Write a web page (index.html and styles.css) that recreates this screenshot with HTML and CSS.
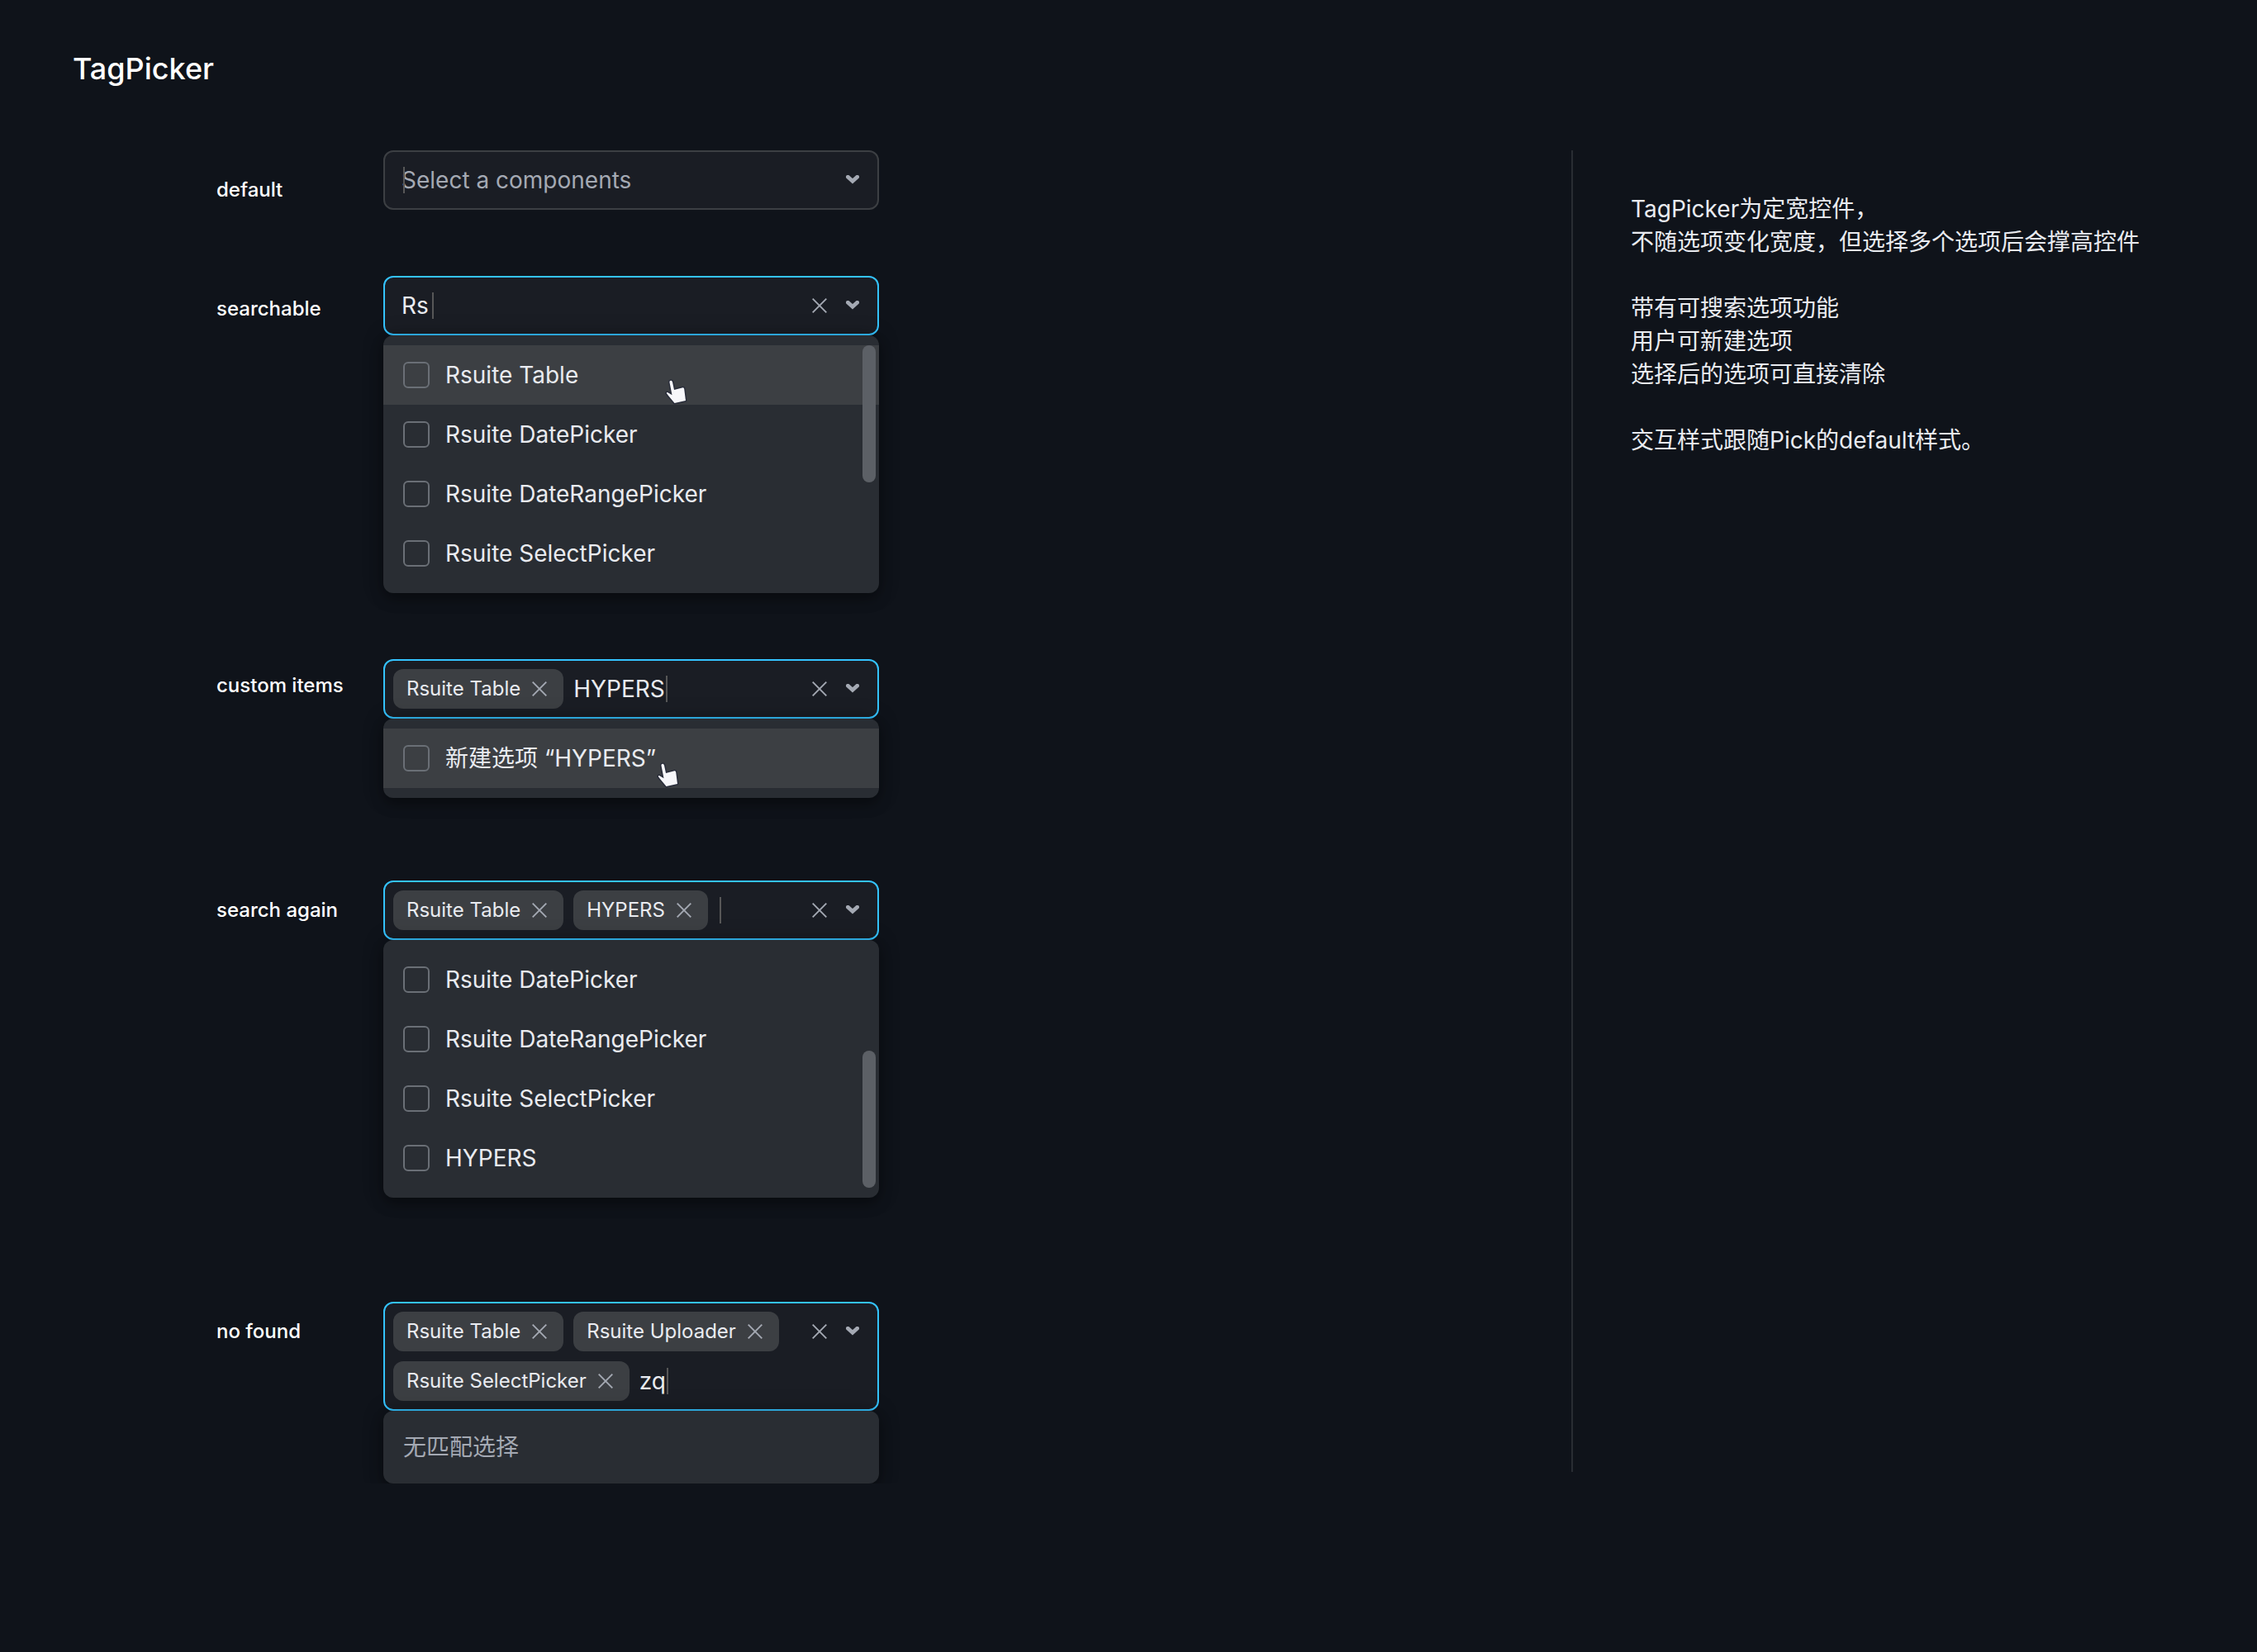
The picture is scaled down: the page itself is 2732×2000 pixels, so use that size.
FILE: index.html
```html
<!DOCTYPE html>
<html lang="zh-CN">
<head>
  <meta charset="utf-8">
  <meta name="viewport" content="width=device-width, initial-scale=1">
  <title>TagPicker</title>
  <link rel="stylesheet" href="styles.css">
</head>
<body>
  <svg class="sprite" aria-hidden="true">
    <symbol id="close" viewBox="0 0 18 18"><path d="M.7.7l16.6 16.6M17.3.7L.7 17.3" fill="none" stroke="currentColor" stroke-width="1.9"/></symbol>
    <symbol id="chevron" viewBox="0 0 16 12"><path d="M2.4 2.200L8 7.200l5.600-5" fill="none" stroke="currentColor" stroke-width="4.800" stroke-linecap="round"/></symbol>
    <symbol id="hand" viewBox="0 0 36 40"><path d="M10.5 11C10 8.5 13.3 8 14 10.5L16 20l10.5-2.8q1.5-.2 1.7 1.8L30 33l-13.500 3L9 27l-2.200-3q.2-1.500 1.700-.7L13.500 26.300z" fill="#f7f7fa" stroke="#292d3a" stroke-width="3" stroke-linejoin="round" paint-order="stroke"/></symbol>
  </svg>

  <header class="page-header">
    <h1 class="page-title">TagPicker</h1>
  </header>

  <div class="layout">
    <main class="demos">
      <section class="demo">
        <label class="demo-label demo-label--default" for="picker-default">default</label>
        <div class="picker">
          <div class="control control--text">
            <div class="values">
              <span class="entry entry--empty"><span class="caret"></span><input class="search" id="picker-default" type="text" placeholder="Select a components"></span>
            </div>
            <div class="actions">
              <button class="action action--toggle" type="button" aria-label="Open"><svg><use href="#chevron"/></svg></button>
            </div>
          </div>
        </div>
      </section>

      <section class="demo">
        <label class="demo-label demo-label--searchable" for="picker-search">searchable</label>
        <div class="picker">
          <div class="control control--text control--active">
            <div class="values">
              <span class="entry"><input class="search" id="picker-search" type="text" value="Rs"><span class="caret"></span></span>
            </div>
            <div class="actions">
              <button class="action" type="button" aria-label="Clear"><svg><use href="#close"/></svg></button>
              <button class="action action--toggle" type="button" aria-label="Close"><svg><use href="#chevron"/></svg></button>
            </div>
          </div>
          <div class="menu">
            <label class="option option--hover"><input class="check" type="checkbox">Rsuite Table<svg class="pointer"><use href="#hand"/></svg></label>
            <label class="option"><input class="check" type="checkbox">Rsuite DatePicker</label>
            <label class="option"><input class="check" type="checkbox">Rsuite DateRangePicker</label>
            <label class="option"><input class="check" type="checkbox">Rsuite SelectPicker</label>
            <span class="thumb thumb--top"></span>
          </div>
        </div>
      </section>

      <section class="demo demo--roomy">
        <label class="demo-label demo-label--custom" for="picker-custom">custom items</label>
        <div class="picker">
          <div class="control control--active">
            <div class="values">
              <span class="tag">Rsuite Table<button class="tag-remove" type="button" aria-label="Remove Rsuite Table"><svg><use href="#close"/></svg></button></span>
              <span class="entry"><input class="search" id="picker-custom" type="text" value="HYPERS"><span class="caret"></span></span>
            </div>
            <div class="actions">
              <button class="action" type="button" aria-label="Clear"><svg><use href="#close"/></svg></button>
              <button class="action action--toggle" type="button" aria-label="Close"><svg><use href="#chevron"/></svg></button>
            </div>
          </div>
          <div class="menu">
            <label class="option option--hover"><input class="check" type="checkbox">新建选项 “HYPERS”<svg class="pointer pointer--create"><use href="#hand"/></svg></label>
          </div>
        </div>
      </section>

      <section class="demo demo--spacious">
        <label class="demo-label" for="picker-again">search again</label>
        <div class="picker">
          <div class="control control--active">
            <div class="values">
              <span class="tag">Rsuite Table<button class="tag-remove" type="button" aria-label="Remove Rsuite Table"><svg><use href="#close"/></svg></button></span>
              <span class="tag">HYPERS<button class="tag-remove" type="button" aria-label="Remove HYPERS"><svg><use href="#close"/></svg></button></span>
              <span class="entry"><input class="search" id="picker-again" type="text"><span class="caret"></span></span>
            </div>
            <div class="actions">
              <button class="action" type="button" aria-label="Clear"><svg><use href="#close"/></svg></button>
              <button class="action action--toggle" type="button" aria-label="Close"><svg><use href="#chevron"/></svg></button>
            </div>
          </div>
          <div class="menu">
            <label class="option"><input class="check" type="checkbox">Rsuite DatePicker</label>
            <label class="option"><input class="check" type="checkbox">Rsuite DateRangePicker</label>
            <label class="option"><input class="check" type="checkbox">Rsuite SelectPicker</label>
            <label class="option"><input class="check" type="checkbox">HYPERS</label>
            <span class="thumb thumb--bottom"></span>
          </div>
        </div>
      </section>

      <section class="demo">
        <label class="demo-label" for="picker-none">no found</label>
        <div class="picker">
          <div class="control control--active">
            <div class="values">
              <span class="tag">Rsuite Table<button class="tag-remove" type="button" aria-label="Remove Rsuite Table"><svg><use href="#close"/></svg></button></span>
              <span class="tag">Rsuite Uploader<button class="tag-remove" type="button" aria-label="Remove Rsuite Uploader"><svg><use href="#close"/></svg></button></span>
              <span class="tag">Rsuite SelectPicker<button class="tag-remove" type="button" aria-label="Remove Rsuite SelectPicker"><svg><use href="#close"/></svg></button></span>
              <span class="entry"><input class="search" id="picker-none" type="text" value="zq"><span class="caret"></span></span>
            </div>
            <div class="actions">
              <button class="action" type="button" aria-label="Clear"><svg><use href="#close"/></svg></button>
              <button class="action action--toggle" type="button" aria-label="Close"><svg><use href="#chevron"/></svg></button>
            </div>
          </div>
          <div class="menu menu--empty">无匹配选择</div>
        </div>
      </section>
    </main>

    <aside class="notes">
      <p>TagPicker为定宽控件，<br>不随选项变化宽度，但选择多个选项后会撑高控件</p>
      <p>带有可搜索选项功能<br>用户可新建选项<br>选择后的选项可直接清除</p>
      <p>交互样式跟随Pick的default样式。</p>
    </aside>
  </div>
</body>
</html>
```
FILE: styles.css
```css
:root {
  --bg: #0f131a;
  --field: #1a1d24;
  --menu: #292d33;
  --raised: #3c3f43;
  --thumb: #5c6066;
  --outline: #6a6f76;
  --muted: #a4a9b3;
  --text: #e9ebf0;
  --primary: #34c3ff;
}

* {
  box-sizing: border-box;
}

body {
  margin: 0;
  background: var(--bg);
  color: var(--text);
  font: 400 28px/40px Inter, "Noto Sans CJK SC", sans-serif;
}

button,
input {
  margin: 0;
  padding: 0;
  border: 0;
  background: none;
  color: inherit;
  font: inherit;
}

.sprite {
  display: none;
}

.page-header {
  padding: 60px 88px 76px;
}

.page-title {
  margin: 0;
  color: #fff;
  font-size: 36px;
  font-weight: 500;
  line-height: 46px;
}

.layout {
  display: grid;
  grid-template-columns: minmax(0, 1fr) 830px;
  align-items: start;
}

.demos {
  display: flex;
  flex-direction: column;
  gap: 80px;
  padding-left: 262px;
}

.demo {
  display: grid;
  grid-template-columns: 202px minmax(0, 600px);
  align-items: start;
}

.demo--roomy {
  margin-bottom: 20px;
}

.demo--spacious {
  margin-bottom: 46px;
}

.demo-label {
  padding-top: 20px;
  color: #fff;
  font-size: 24px;
  font-weight: 500;
  line-height: 32px;
}

.demo-label--default {
  padding-top: 32px;
}

.demo-label--searchable {
  padding-top: 24px;
}

.demo-label--custom {
  padding-top: 16px;
}

.control {
  display: flex;
  align-items: flex-start;
  padding: 10px;
  border: 2px solid var(--raised);
  border-radius: 12px;
  background: var(--field);
}

.control--active {
  border-color: var(--primary);
}

.values {
  display: flex;
  flex: 1;
  flex-wrap: wrap;
  gap: 12px;
  min-width: 0;
}

.tag {
  display: flex;
  align-items: center;
  gap: 14px;
  height: 48px;
  padding: 0 20px 0 16px;
  border-radius: 12px;
  background: var(--raised);
  font-size: 24px;
}

.tag-remove,
.action {
  display: flex;
  width: 18px;
  height: 18px;
  color: var(--muted);
  cursor: pointer;
}

.tag-remove svg,
.action svg {
  width: 100%;
  height: 100%;
}

.entry {
  position: relative;
  display: flex;
  align-items: center;
  gap: 1px;
  height: 48px;
}

.control--text .entry {
  gap: 4px;
  padding-left: 10px;
}

.entry--empty {
  flex: 1;
}

.search {
  min-width: 0;
  field-sizing: content;
  outline: 0;
}

.search::placeholder {
  color: var(--muted);
  opacity: 1;
}

.caret {
  width: 2px;
  height: 32px;
  background: #575757;
}

.entry--empty .caret {
  position: absolute;
  left: 12px;
}

.actions {
  display: flex;
  align-items: center;
  gap: 23px;
  height: 48px;
  padding-right: 12px;
}

.action--toggle {
  width: 16px;
  height: 12px;
}

.menu {
  position: relative;
  padding: 12px 0;
  border-radius: 12px;
  background: var(--menu);
  box-shadow: 0 8px 16px rgba(0, 0, 0, .3), 0 0 24px rgba(0, 0, 0, .25);
}

.menu--empty {
  padding: 24px;
  color: var(--muted);
}

.option {
  position: relative;
  display: flex;
  align-items: center;
  gap: 19px;
  height: 72px;
  padding: 0 24px;
}

.option--hover {
  background: var(--raised);
}

.check {
  appearance: none;
  width: 32px;
  height: 32px;
  border: 2px solid var(--outline);
  border-radius: 6px;
}

.pointer {
  position: absolute;
  top: 34px;
  left: 336px;
  width: 36px;
  height: 40px;
}

.pointer--create {
  left: 326px;
}

.thumb {
  position: absolute;
  right: 4px;
  width: 16px;
  height: 166px;
  border-radius: 8px;
  background: var(--thumb);
}

.thumb--top {
  top: 12px;
}

.thumb--bottom {
  bottom: 12px;
}

.notes {
  min-height: 1600px;
  padding: 51px 70px;
  border-left: 2px solid var(--menu);
}

.notes p {
  margin: 0 0 40px;
}
```
